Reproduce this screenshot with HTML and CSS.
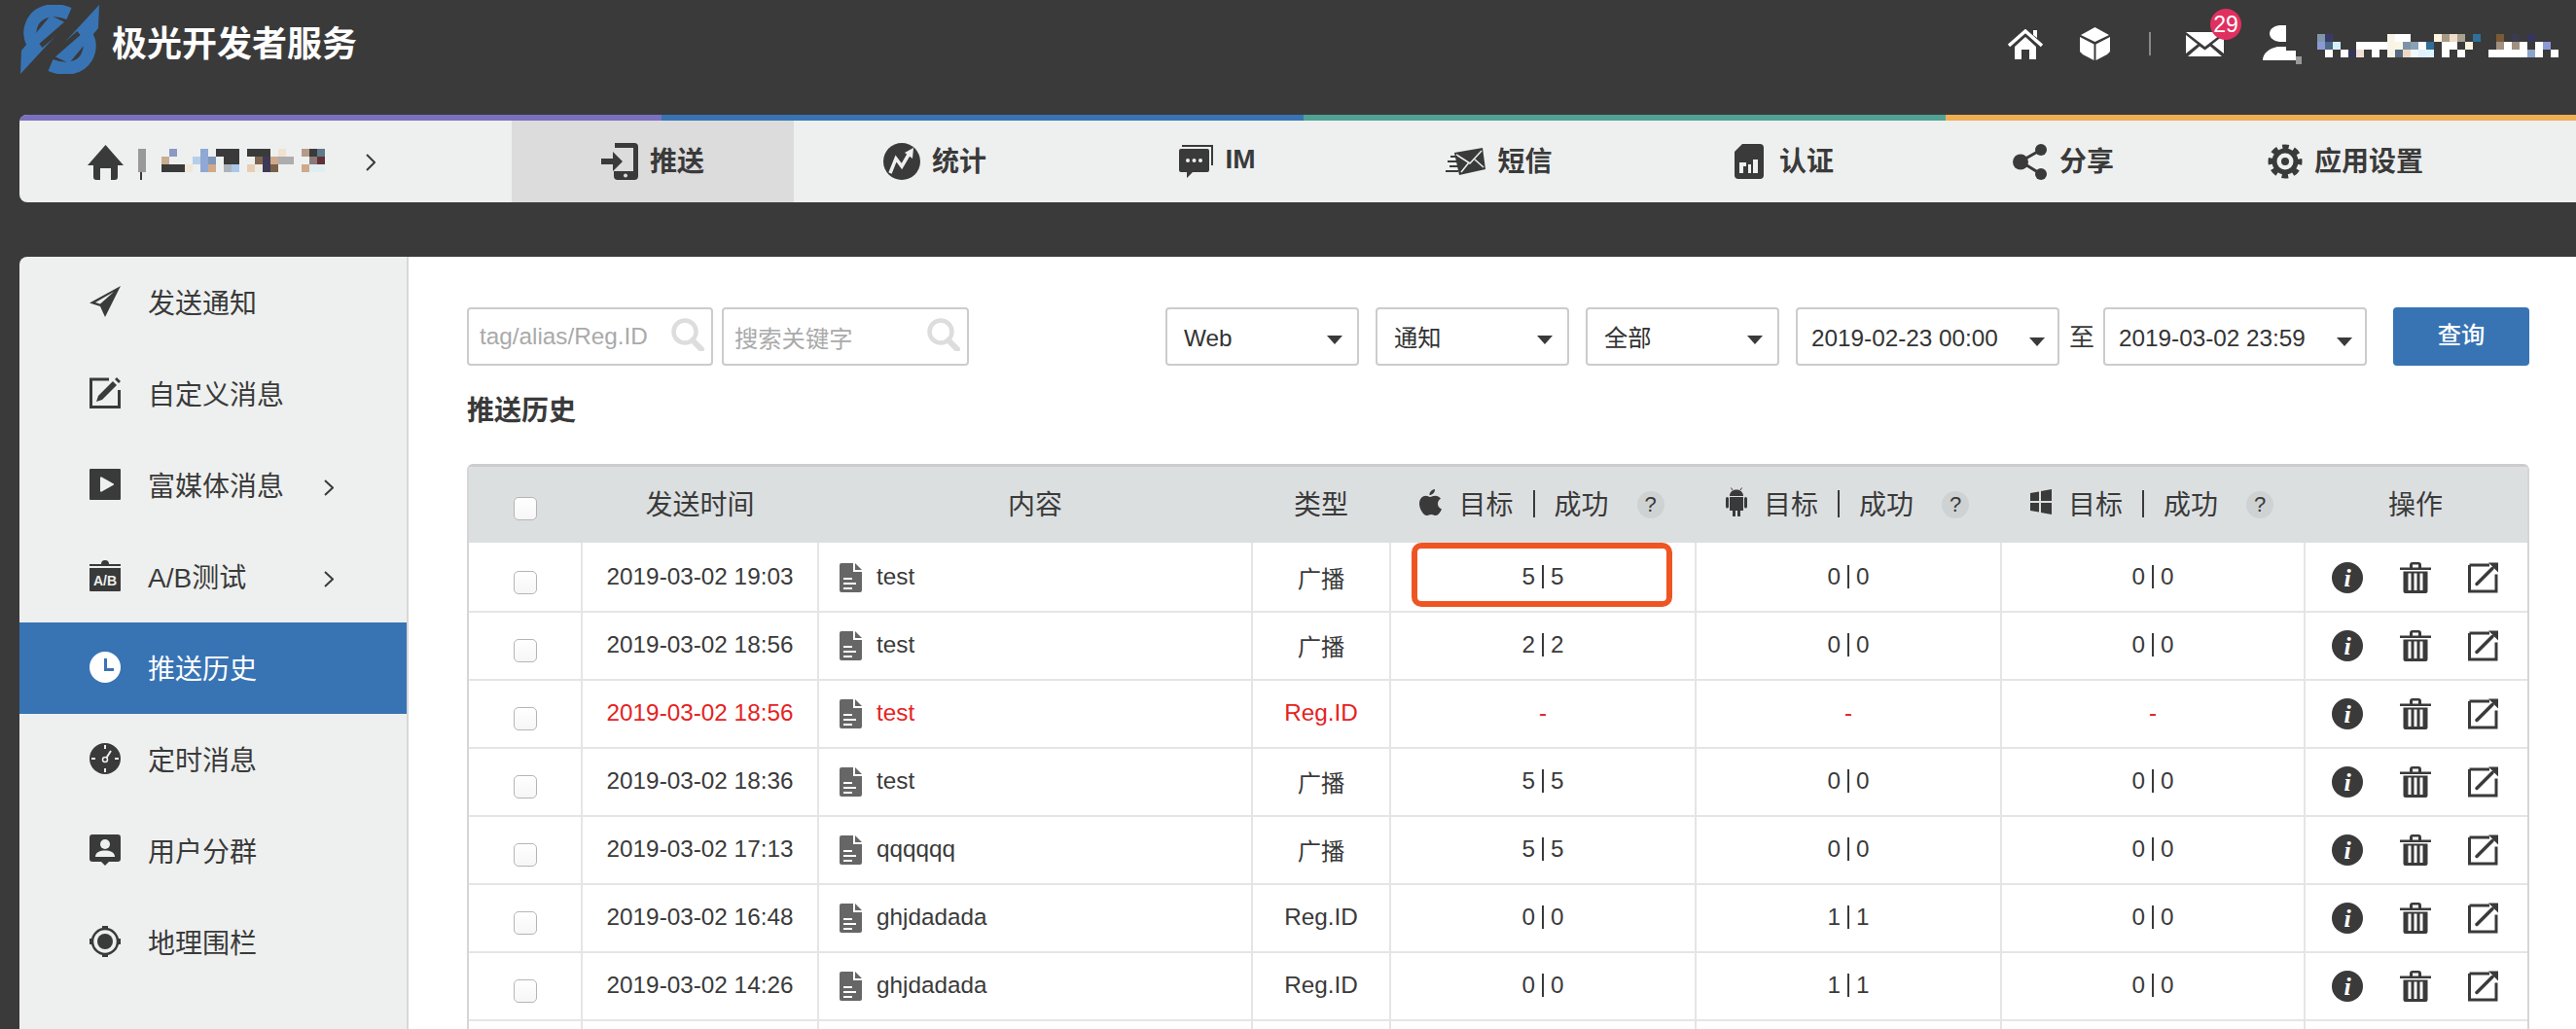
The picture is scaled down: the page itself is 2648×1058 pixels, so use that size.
FILE: index.html
```html
<!DOCTYPE html>
<html lang="zh-CN">
<head>
    <meta charset="UTF-8">
    <title>极光开发者服务</title>
    <link rel="stylesheet" href="styles.css">
</head>
<body>
    <svg class="defs" width="0" height="0">
        <symbol id="i-doc" viewBox="0 0 23 30">
            <path d="M2 0H14V9H23V28a2 2 0 0 1-2 2H2a2 2 0 0 1-2-2V2a2 2 0 0 1 2-2Z" fill="#666"/>
            <path d="M16 0L23 7H16Z" fill="#666"/>
            <path d="M4 15H13V17H4ZM4 20H17V22H4ZM4 25H13V27H4Z" fill="#fff"/>
        </symbol>
        <symbol id="i-trash" viewBox="0 0 32 32">
            <path d="M0 5.500H32V8H0ZM10 5.500V3a3 3 0 0 1 3-3H19a3 3 0 0 1 3 3V5.500H19V2.500H13V5.500Z" fill="#3a3a3a"/>
            <path d="M3.500 9.500H28.500V30a2 2 0 0 1-2 2H5.500a2 2 0 0 1-2-2ZM8.500 11.500V29H11.500V11.500ZM14.500 11.500V29H17.500V11.500ZM20.500 11.500V29H23.500V11.500Z" fill="#3a3a3a" fill-rule="evenodd"/>
        </symbol>
        <symbol id="i-open" viewBox="0 0 31 31">
            <path d="M1.500 2.500H22M29 12V29.500H1.500V2.500" fill="none" stroke="#3a3a3a" stroke-width="3"/>
            <path d="M9 22L25 6" fill="none" stroke="#3a3a3a" stroke-width="3.500" stroke-linecap="round"/>
            <path d="M21 0H31V10Z" fill="#3a3a3a"/>
        </symbol>
        <symbol id="i-search" viewBox="0 0 35 34">
            <circle cx="14" cy="14" r="11.500" fill="none" stroke="#ddd" stroke-width="4.500"/>
            <path d="M22 23L31 32" fill="none" stroke="#ddd" stroke-width="6" stroke-linecap="round"/>
        </symbol>
    </svg>

    <header class="topbar">
        <svg class="logo" viewBox="0 0 81 71">
            <path d="M81 0L80 24 50 60 33 52Z" fill="#3874b4"/>
            <path d="M0 71L1 47 31 11 48 19Z" fill="#3874b4"/>
            <path d="M50 9C36 3 20 5 13 17 8 26 9 36 15 42" fill="none" stroke="#3874b4" stroke-width="13"/>
            <path d="M31 62C45 68 61 66 68 54 73 45 72 35 66 29" fill="none" stroke="#3874b4" stroke-width="13"/>
            <path d="M60 8L21 42" fill="none" stroke="#3a3a3a" stroke-width="5"/>
            <path d="M60 29L21 63" fill="none" stroke="#3a3a3a" stroke-width="5"/>
        </svg>
        <div class="brand">极光开发者服务</div>
        <div class="top-tools">
            <svg class="tool-home" viewBox="0 0 36 31">
                <path d="M1 17L18 2 35 17" fill="none" stroke="#fff" stroke-width="3.500"/>
                <path d="M26 1H30V9L26 6Z" fill="#fff"/>
                <path d="M7 18L18 8 29 18V31H22V21H14V31H7Z" fill="#fff"/>
            </svg>
            <svg class="tool-cube" viewBox="0 0 31 34">
                <path d="M15.500 0L30 8 15.500 15 1 8Z" fill="#fff"/>
                <path d="M0 10L14.500 17.500V34L3 28 0 25Z" fill="#fff"/>
                <path d="M31 10L16.500 17.500V34L28 28 31 25Z" fill="#fff"/>
            </svg>
            <span class="tool-divider"></span>
            <div class="tool-mail">
                <svg viewBox="0 0 39 25">
                    <path d="M0 0H39L19.500 15Z" fill="#fff"/>
                    <path d="M0 3L12 12.500 0 22ZM39 3L27 12.500 39 22Z" fill="#fff"/>
                    <path d="M2 25L14 14.500 19.500 18.500 25 14.500 37 25Z" fill="#fff"/>
                </svg>
                <span class="badge">29</span>
            </div>
            <svg class="tool-user" viewBox="0 0 40 40">
                <path d="M17 0H24V17H17C11 16 7 13 7 8.500S11 1 17 0Z" fill="#fff"/>
                <path d="M15 22H24V26H34V36H0C0 29 6 24 15 22Z" fill="#fff"/>
                <rect x="34" y="32" width="6" height="8" fill="#999"/>
            </svg>
            <svg class="mosaic-user" viewBox="0 0 248 24">
                <rect x="0" y="0" width="8" height="8" fill="#7f97a8"/><rect x="0" y="8" width="8" height="8" fill="#8c99d8"/>
                <rect x="8" y="0" width="8" height="8" fill="#3a3a6a"/><rect x="8" y="8" width="8" height="8" fill="#4a6a85"/><rect x="8" y="16" width="8" height="8" fill="#fff"/>
                <rect x="16" y="8" width="8" height="8" fill="#d8f0fa"/><rect x="24" y="16" width="8" height="8" fill="#fff"/><rect x="32" y="16" width="8" height="8" fill="#35355a"/>
                <rect x="40" y="8" width="8" height="8" fill="#fff"/><rect x="40" y="16" width="8" height="8" fill="#f0e0d5"/>
                <rect x="48" y="8" width="8" height="8" fill="#fff"/><rect x="56" y="8" width="8" height="16" fill="#fff"/><rect x="64" y="8" width="8" height="8" fill="#fff"/>
                <rect x="72" y="0" width="8" height="24" fill="#f8f5e8"/><rect x="80" y="0" width="8" height="8" fill="#fff"/><rect x="80" y="8" width="8" height="8" fill="#fbf5e5"/><rect x="80" y="16" width="8" height="8" fill="#566a80"/>
                <rect x="88" y="0" width="8" height="8" fill="#fff"/><rect x="88" y="8" width="8" height="8" fill="#7d93a8"/><rect x="88" y="16" width="8" height="8" fill="#eed8c5"/>
                <rect x="96" y="8" width="8" height="8" fill="#8aa0b5"/><rect x="96" y="16" width="8" height="8" fill="#f0f8fd"/>
                <rect x="104" y="8" width="8" height="8" fill="#fff"/><rect x="104" y="16" width="8" height="8" fill="#e0f0ff"/>
                <rect x="112" y="8" width="8" height="8" fill="#2f6f9a"/><rect x="112" y="16" width="8" height="8" fill="#e0f4ff"/>
                <rect x="120" y="0" width="8" height="8" fill="#fdf5e0"/>
                <rect x="128" y="0" width="8" height="8" fill="#a89a88"/><rect x="128" y="8" width="8" height="16" fill="#fff"/>
                <rect x="136" y="0" width="8" height="8" fill="#f0dcc8"/><rect x="136" y="8" width="8" height="8" fill="#fff"/>
                <rect x="144" y="0" width="8" height="8" fill="#a8a090"/><rect x="144" y="16" width="8" height="8" fill="#fff"/>
                <rect x="152" y="8" width="8" height="8" fill="#fbf5e0"/><rect x="160" y="0" width="8" height="8" fill="#2f6f9a"/>
                <rect x="176" y="16" width="8" height="8" fill="#fff"/>
                <rect x="184" y="0" width="8" height="8" fill="#7a5a38"/><rect x="184" y="8" width="8" height="8" fill="#a09080"/><rect x="184" y="16" width="8" height="8" fill="#fff"/>
                <rect x="192" y="8" width="8" height="16" fill="#fff"/>
                <rect x="200" y="0" width="8" height="8" fill="#3a3a50"/><rect x="200" y="8" width="8" height="8" fill="#a09080"/><rect x="200" y="16" width="8" height="8" fill="#fff"/>
                <rect x="208" y="8" width="8" height="16" fill="#fff"/>
                <rect x="216" y="0" width="8" height="8" fill="#35355f"/><rect x="216" y="16" width="8" height="8" fill="#8ba3c8"/>
                <rect x="224" y="8" width="8" height="16" fill="#fff"/><rect x="232" y="8" width="8" height="8" fill="#8c99d8"/><rect x="240" y="16" width="8" height="8" fill="#fff"/>
            </svg>
        </div>
    </header>

    <nav class="mainnav">
        <div class="accent">
            <span class="accent-purple"></span>
            <span class="accent-blue"></span>
            <span class="accent-teal"></span>
            <span class="accent-orange"></span>
        </div>
        <div class="nav-row">
            <div class="crumb">
                <svg class="crumb-home" viewBox="0 0 37 36">
                    <path d="M18.500 0L37 21H31V33a3 3 0 0 1-3 3H24V24H13V36H9a3 3 0 0 1-3-3V21H0Z" fill="#3a3a3a"/>
                </svg>
                <svg class="mosaic-app" viewBox="0 0 192 32">
                    <rect x="0" y="0" width="8" height="24" fill="#999"/><rect x="2" y="24" width="2" height="8" fill="#3a3a3a"/>
                    <rect x="32" y="0" width="8" height="8" fill="#8c99c4"/><rect x="24" y="8" width="8" height="8" fill="#c9ad90"/><rect x="24" y="16" width="24" height="8" fill="#3a3a3a"/><rect x="48" y="16" width="8" height="8" fill="#efe7d8"/>
                    <rect x="56" y="8" width="8" height="8" fill="#b5cfe8"/><rect x="64" y="0" width="8" height="24" fill="#8fa8d4"/><rect x="72" y="8" width="8" height="8" fill="#7f97b8"/><rect x="72" y="16" width="8" height="8" fill="#cfa98a"/>
                    <rect x="80" y="0" width="24" height="8" fill="#3a3a3a"/><rect x="88" y="8" width="16" height="8" fill="#3a3a3a"/><rect x="88" y="16" width="8" height="8" fill="#adb3bb"/><rect x="96" y="16" width="8" height="8" fill="#a9c8e8"/>
                    <rect x="112" y="0" width="24" height="8" fill="#3a3a3a"/><rect x="120" y="8" width="8" height="8" fill="#7f6550"/><rect x="128" y="8" width="8" height="16" fill="#3c3a55"/><rect x="112" y="16" width="8" height="8" fill="#e8cdb5"/><rect x="120" y="16" width="8" height="8" fill="#f0ebe0"/>
                    <rect x="136" y="8" width="8" height="8" fill="#cfa98a"/><rect x="136" y="16" width="8" height="8" fill="#7a6048"/><rect x="144" y="0" width="8" height="8" fill="#efe3cf"/><rect x="144" y="8" width="16" height="8" fill="#adadad"/>
                    <rect x="168" y="0" width="8" height="8" fill="#b59a8a"/><rect x="168" y="16" width="8" height="8" fill="#cfa98a"/><rect x="176" y="0" width="8" height="8" fill="#3a3a3a"/><rect x="176" y="8" width="8" height="8" fill="#8a7a78"/>
                    <rect x="184" y="0" width="8" height="8" fill="#5f7a88"/><rect x="184" y="8" width="8" height="8" fill="#632f38"/><rect x="176" y="16" width="16" height="8" fill="#e0eef2"/>
                </svg>
                <svg class="crumb-arrow" viewBox="0 0 10 18">
                    <path d="M1 1L9 9 1 17" fill="none" stroke="#3a3a3a" stroke-width="2"/>
                </svg>
            </div>
            <a class="tab active">
                <svg class="tab-icon push" viewBox="0 0 38 38">
                    <path d="M14 0H34a4 4 0 0 1 4 4V34a4 4 0 0 1-4 4H17a4 4 0 0 1-4-4V29H33V5H14Z" fill="#3a3a3a"/>
                    <circle cx="25" cy="33.500" r="2" fill="#dcdcdc"/>
                    <path d="M0 16H12V9L22 19 12 29V22H0Z" fill="#3a3a3a"/>
                </svg>
                推送
            </a>
            <a class="tab">
                <svg class="tab-icon stat" viewBox="0 0 38 38">
                    <circle cx="19" cy="19" r="19" fill="#3a3a3a"/>
                    <path d="M7 31L13 16 19 24 26 12" fill="none" stroke="#eef0ef" stroke-width="3.500"/>
                    <path d="M22 10L31 5 30 16Z" fill="#eef0ef"/>
                </svg>
                统计
            </a>
            <a class="tab">
                <svg class="tab-icon im" viewBox="0 0 36 34">
                    <path d="M4 1H35V21" fill="none" stroke="#3a3a3a" stroke-width="2"/>
                    <path d="M3 4H30a2 2 0 0 1 2 2V26a2 2 0 0 1-2 2H15L9 34V28H3a2 2 0 0 1-2-2V6a2 2 0 0 1 2-2Z" fill="#3a3a3a"/>
                    <circle cx="10" cy="16" r="2" fill="#eef0ef"/><circle cx="16.500" cy="16" r="2" fill="#eef0ef"/><circle cx="23" cy="16" r="2" fill="#eef0ef"/>
                </svg>
                IM
            </a>
            <a class="tab">
                <svg class="tab-icon sms" viewBox="0 0 41 28">
                    <path d="M9 5L38 0 41 22 14 28Z" fill="#3a3a3a"/>
                    <path d="M11 7L25 16 37 3M16 25L24 15M30 12L39 20" fill="none" stroke="#eef0ef" stroke-width="1.500"/>
                    <path d="M5 9H12M2 14H12M4 19H13M0 24H13" fill="none" stroke="#3a3a3a" stroke-width="2"/>
                </svg>
                短信
            </a>
            <a class="tab">
                <svg class="tab-icon auth" viewBox="0 0 30 36">
                    <path d="M8 0H26a4 4 0 0 1 4 4V32a4 4 0 0 1-4 4H4a4 4 0 0 1-4-4V8Z" fill="#3a3a3a"/>
                    <path d="M5 19H12V23H9V30H5ZM14 21H17V30H14ZM19 16H24V30H19Z" fill="#eef0ef"/>
                </svg>
                认证
            </a>
            <a class="tab">
                <svg class="tab-icon share" viewBox="0 0 36 37">
                    <path d="M29 6L8 18 29 31" fill="none" stroke="#3a3a3a" stroke-width="3"/>
                    <circle cx="29" cy="6" r="6" fill="#3a3a3a"/>
                    <circle cx="8" cy="18.500" r="8" fill="#3a3a3a"/>
                    <circle cx="29" cy="31" r="6" fill="#3a3a3a"/>
                </svg>
                分享
            </a>
            <a class="tab">
                <svg class="tab-icon gear" viewBox="0 0 36 36">
                    <circle cx="18" cy="18" r="14.500" fill="none" stroke="#3a3a3a" stroke-width="6" stroke-dasharray="6.390 5" stroke-dashoffset="3.200"/>
                    <circle cx="18" cy="18" r="11" fill="none" stroke="#3a3a3a" stroke-width="5"/>
                    <circle cx="18" cy="18" r="4" fill="#3a3a3a"/>
                </svg>
                应用设置
            </a>
        </div>
    </nav>

    <div class="workspace">
        <aside class="sidebar">
            <a class="side-item">
                <svg class="side-icon" viewBox="0 0 32 32">
                    <path d="M32 0L0 17.500 11 21 16 32Z" fill="#3a3a3a"/>
                    <path d="M25 6L6 17 11 18.500Z" fill="#eef0ef"/>
                </svg>
                <span class="side-label">发送通知</span>
            </a>
            <a class="side-item">
                <svg class="side-icon" viewBox="0 0 32 32">
                    <path d="M20 2H1.500V30.500H30.500V13" fill="none" stroke="#3a3a3a" stroke-width="3"/>
                    <path d="M9 19L24 4 28 8 13 23 7 25Z" fill="#3a3a3a"/>
                    <path d="M26 2L28 0 32 4 30 6Z" fill="#3a3a3a"/>
                </svg>
                <span class="side-label">自定义消息</span>
            </a>
            <a class="side-item">
                <svg class="side-icon" viewBox="0 0 32 32">
                    <rect width="32" height="32" rx="1" fill="#3a3a3a"/>
                    <path d="M11 9.500a1 1 0 0 1 1.500-1L24 15a1 1 0 0 1 0 2L12.500 23.500a1 1 0 0 1-1.500-1Z" fill="#eef0ef"/>
                </svg>
                <span class="side-label">富媒体消息</span>
                <svg class="side-arrow" viewBox="0 0 10 17"><path d="M1 1L9 8.500 1 16" fill="none" stroke="#3a3a3a" stroke-width="2"/></svg>
            </a>
            <a class="side-item">
                <svg class="side-icon" viewBox="0 0 32 32">
                    <path d="M0 4H12a4 4 0 0 1 8 0H32V6H0Z" fill="#3a3a3a"/>
                    <path d="M0 8H32V31a1 1 0 0 1-1 1H1a1 1 0 0 1-1-1Z" fill="#3a3a3a"/>
                    <text x="16" y="26" class="ab-text">A/B</text>
                </svg>
                <span class="side-label">A/B测试</span>
                <svg class="side-arrow" viewBox="0 0 10 17"><path d="M1 1L9 8.500 1 16" fill="none" stroke="#3a3a3a" stroke-width="2"/></svg>
            </a>
            <a class="side-item active">
                <svg class="side-icon" viewBox="0 0 32 32">
                    <circle cx="16" cy="16" r="16" fill="#fff"/>
                    <path d="M15 7H18V17H25V20H15Z" fill="#3874b4"/>
                </svg>
                <span class="side-label">推送历史</span>
            </a>
            <a class="side-item">
                <svg class="side-icon" viewBox="0 0 32 32">
                    <circle cx="16" cy="16" r="16" fill="#3a3a3a"/>
                    <path d="M16 2V6M16 26V30M2 16H6M26 16H30" stroke="#eef0ef" stroke-width="2"/>
                    <circle cx="16" cy="17" r="2.500" fill="none" stroke="#eef0ef" stroke-width="1.500"/>
                    <path d="M17.500 15L22 8" stroke="#eef0ef" stroke-width="2"/>
                </svg>
                <span class="side-label">定时消息</span>
            </a>
            <a class="side-item">
                <svg class="side-icon" viewBox="0 0 32 32">
                    <path d="M3 0H29a3 3 0 0 1 3 3V25a3 3 0 0 1-3 3H20L16 32 12 28H3a3 3 0 0 1-3-3V3a3 3 0 0 1 3-3Z" fill="#3a3a3a"/>
                    <circle cx="16" cy="10" r="5" fill="#eef0ef"/>
                    <path d="M6 23C6 18 11 16.500 16 16.500S26 18 26 23Z" fill="#eef0ef"/>
                </svg>
                <span class="side-label">用户分群</span>
            </a>
            <a class="side-item">
                <svg class="side-icon" viewBox="0 0 32 32">
                    <circle cx="16" cy="16" r="13" fill="none" stroke="#3a3a3a" stroke-width="2.500"/>
                    <circle cx="16" cy="16" r="8" fill="#3a3a3a"/>
                    <path d="M13 0H19V4H13ZM13 28H19V32H13ZM0 13H4V19H0ZM28 13H32V19H28Z" fill="#3a3a3a"/>
                </svg>
                <span class="side-label">地理围栏</span>
            </a>
        </aside>

        <main class="content">
            <div class="toolbar">
                <div class="search first"><span class="placeholder">tag/alias/Reg.ID</span><svg class="search-icon"><use href="#i-search"/></svg></div>
                <div class="search"><span class="placeholder">搜索关键字</span><svg class="search-icon"><use href="#i-search"/></svg></div>
                <div class="filters">
                    <div class="select">Web<span class="caret"></span></div>
                    <div class="select">通知<span class="caret"></span></div>
                    <div class="select">全部<span class="caret"></span></div>
                    <div class="select date">2019-02-23 00:00<span class="caret"></span></div>
                    <span class="date-to">至</span>
                    <div class="select date">2019-03-02 23:59<span class="caret"></span></div>
                    <a class="btn-query">查询</a>
                </div>
            </div>

            <h2 class="section-title">推送历史</h2>

            <div class="table-wrap">
                <table class="history">
                    <colgroup>
                        <col class="c-check"><col class="c-time"><col class="c-body"><col class="c-type">
                        <col class="c-stat"><col class="c-stat"><col class="c-stat-last"><col class="c-ops">
                    </colgroup>
                    <thead>
                        <tr>
                            <th><input type="checkbox" class="check"></th>
                            <th>发送时间</th>
                            <th>内容</th>
                            <th>类型</th>
                            <th>
                                <div class="stat-head">
                                    <svg class="os-icon apple" viewBox="0 0 23 27">
                                        <path d="M16 0c.3 3-2.500 6-5.500 6C10.200 3 13 .3 16 0ZM11 8c1.500 0 3-1.200 5.500-1.200 2 0 4.200 1 5.500 3-4.500 2.800-3.800 8.800 1 10.700-1.500 3.500-3.700 6.500-6 6.500-1.800 0-2.700-1.100-4.800-1.100s-3 1.100-4.700 1.100C4.500 27 0 20.500 0 15c0-5.500 3.500-8.200 6.500-8.200C8.500 6.800 9.800 8 11 8Z" fill="#3a3a3a"/>
                                    </svg>
                                    <span>目标</span><i class="bar"></i><span>成功</span><span class="tip">?</span>
                                </div>
                            </th>
                            <th>
                                <div class="stat-head">
                                    <svg class="os-icon android" viewBox="0 0 22 30">
                                        <path d="M4 9C4 5 7 2.500 11 2.500S18 5 18 9ZM4 10H18V24H15V29a1.500 1.500 0 0 1-3 0V24H10V29a1.500 1.500 0 0 1-3 0V24H4ZM0 11.500a1.500 1.500 0 0 1 3 0V20a1.500 1.500 0 0 1-3 0ZM19 11.500a1.500 1.500 0 0 1 3 0V20a1.500 1.500 0 0 1-3 0Z" fill="#3a3a3a"/>
                                        <path d="M7 3L5.500 .5M15 3L16.500 .5" stroke="#3a3a3a" stroke-width="1"/>
                                    </svg>
                                    <span>目标</span><i class="bar"></i><span>成功</span><span class="tip">?</span>
                                </div>
                            </th>
                            <th>
                                <div class="stat-head">
                                    <svg class="os-icon windows" viewBox="0 0 22 26">
                                        <path d="M0 4L9 2.500V12H0ZM11 2L22 0V12H11ZM0 14H9V23.500L0 22ZM11 14H22V26L11 24Z" fill="#3a3a3a"/>
                                    </svg>
                                    <span>目标</span><i class="bar"></i><span>成功</span><span class="tip">?</span>
                                </div>
                            </th>
                            <th>操作</th>
                        </tr>
                    </thead>
                    <tbody>
                        <tr>
                            <td><input type="checkbox" class="check"></td>
                            <td>2019-03-02 19:03</td>
                            <td><div class="msg"><svg class="doc"><use href="#i-doc"/></svg>test</div></td>
                            <td>广播</td>
                            <td class="marked">5<i class="num-bar"></i>5<span class="mark"></span></td>
                            <td>0<i class="num-bar"></i>0</td>
                            <td>0<i class="num-bar"></i>0</td>
                            <td><div class="ops"><svg class="op-info" viewBox="0 0 32 32"><circle cx="16" cy="16" r="16"/><text x="16" y="25">i</text></svg><svg class="op-trash"><use href="#i-trash"/></svg><svg class="op-open"><use href="#i-open"/></svg></div></td>
                        </tr>
                        <tr>
                            <td><input type="checkbox" class="check"></td>
                            <td>2019-03-02 18:56</td>
                            <td><div class="msg"><svg class="doc"><use href="#i-doc"/></svg>test</div></td>
                            <td>广播</td>
                            <td>2<i class="num-bar"></i>2</td>
                            <td>0<i class="num-bar"></i>0</td>
                            <td>0<i class="num-bar"></i>0</td>
                            <td><div class="ops"><svg class="op-info" viewBox="0 0 32 32"><circle cx="16" cy="16" r="16"/><text x="16" y="25">i</text></svg><svg class="op-trash"><use href="#i-trash"/></svg><svg class="op-open"><use href="#i-open"/></svg></div></td>
                        </tr>
                        <tr class="failed">
                            <td><input type="checkbox" class="check"></td>
                            <td>2019-03-02 18:56</td>
                            <td><div class="msg"><svg class="doc"><use href="#i-doc"/></svg>test</div></td>
                            <td>Reg.ID</td>
                            <td>-</td>
                            <td>-</td>
                            <td>-</td>
                            <td><div class="ops"><svg class="op-info" viewBox="0 0 32 32"><circle cx="16" cy="16" r="16"/><text x="16" y="25">i</text></svg><svg class="op-trash"><use href="#i-trash"/></svg><svg class="op-open"><use href="#i-open"/></svg></div></td>
                        </tr>
                        <tr>
                            <td><input type="checkbox" class="check"></td>
                            <td>2019-03-02 18:36</td>
                            <td><div class="msg"><svg class="doc"><use href="#i-doc"/></svg>test</div></td>
                            <td>广播</td>
                            <td>5<i class="num-bar"></i>5</td>
                            <td>0<i class="num-bar"></i>0</td>
                            <td>0<i class="num-bar"></i>0</td>
                            <td><div class="ops"><svg class="op-info" viewBox="0 0 32 32"><circle cx="16" cy="16" r="16"/><text x="16" y="25">i</text></svg><svg class="op-trash"><use href="#i-trash"/></svg><svg class="op-open"><use href="#i-open"/></svg></div></td>
                        </tr>
                        <tr>
                            <td><input type="checkbox" class="check"></td>
                            <td>2019-03-02 17:13</td>
                            <td><div class="msg"><svg class="doc"><use href="#i-doc"/></svg>qqqqqq</div></td>
                            <td>广播</td>
                            <td>5<i class="num-bar"></i>5</td>
                            <td>0<i class="num-bar"></i>0</td>
                            <td>0<i class="num-bar"></i>0</td>
                            <td><div class="ops"><svg class="op-info" viewBox="0 0 32 32"><circle cx="16" cy="16" r="16"/><text x="16" y="25">i</text></svg><svg class="op-trash"><use href="#i-trash"/></svg><svg class="op-open"><use href="#i-open"/></svg></div></td>
                        </tr>
                        <tr>
                            <td><input type="checkbox" class="check"></td>
                            <td>2019-03-02 16:48</td>
                            <td><div class="msg"><svg class="doc"><use href="#i-doc"/></svg>ghjdadada</div></td>
                            <td>Reg.ID</td>
                            <td>0<i class="num-bar"></i>0</td>
                            <td>1<i class="num-bar"></i>1</td>
                            <td>0<i class="num-bar"></i>0</td>
                            <td><div class="ops"><svg class="op-info" viewBox="0 0 32 32"><circle cx="16" cy="16" r="16"/><text x="16" y="25">i</text></svg><svg class="op-trash"><use href="#i-trash"/></svg><svg class="op-open"><use href="#i-open"/></svg></div></td>
                        </tr>
                        <tr>
                            <td><input type="checkbox" class="check"></td>
                            <td>2019-03-02 14:26</td>
                            <td><div class="msg"><svg class="doc"><use href="#i-doc"/></svg>ghjdadada</div></td>
                            <td>Reg.ID</td>
                            <td>0<i class="num-bar"></i>0</td>
                            <td>1<i class="num-bar"></i>1</td>
                            <td>0<i class="num-bar"></i>0</td>
                            <td><div class="ops"><svg class="op-info" viewBox="0 0 32 32"><circle cx="16" cy="16" r="16"/><text x="16" y="25">i</text></svg><svg class="op-trash"><use href="#i-trash"/></svg><svg class="op-open"><use href="#i-open"/></svg></div></td>
                        </tr>
                        <tr class="row-stub">
                            <td></td><td></td><td></td><td></td><td></td><td></td><td></td><td></td>
                        </tr>
                    </tbody>
                </table>
            </div>
        </main>
    </div>
</body>
</html>
```

FILE: styles.css
```css
* {
    box-sizing: border-box;
}
html, body {
    height: 1058px;
    overflow: hidden;
}
body {
    margin: 0;
    background-color: #3a3a3a;
    color: #3a3a3a;
    font-family: "Liberation Sans", "Noto Sans CJK SC", sans-serif;
    font-size: 24.3px;
}
.defs {
    position: absolute;
}
svg {
    display: block;
    flex: none;
}

/* top bar */
.topbar {
    display: flex;
    align-items: center;
    height: 118px;
    padding: 0 18px 28px 21px;
}
.logo {
    width: 81px;
    height: 71px;
    margin-bottom: 9px;
}
.brand {
    margin: 0 0 6px 13px;
    color: #fff;
    font-size: 36px;
    font-weight: 700;
}
.top-tools {
    display: flex;
    align-items: center;
    margin-left: auto;
}
.tool-home {
    width: 36px;
    height: 31px;
}
.tool-cube {
    width: 31px;
    height: 34px;
    margin-left: 38px;
}
.tool-divider {
    width: 2px;
    height: 24px;
    margin: 0 36px 0 40px;
    background: #888;
}
.tool-mail {
    position: relative;
    width: 39px;
    height: 25px;
}
.badge {
    position: absolute;
    left: 25px;
    top: -24px;
    width: 32px;
    height: 32px;
    border-radius: 50%;
    background: #e0305f;
    color: #fff;
    font-size: 23px;
    line-height: 32px;
    text-align: center;
}
.tool-user {
    width: 40px;
    height: 40px;
    margin: 2px 16px 0 40px;
}
.mosaic-user {
    width: 248px;
    height: 24px;
    margin-top: 4px;
}

/* main nav */
.mainnav {
    margin-left: 20px;
    height: 90px;
    border-top-left-radius: 8px;
    border-bottom-left-radius: 8px;
    overflow: hidden;
    background: #eef0ef;
}
.accent {
    display: flex;
    height: 6px;
}
.accent span {
    width: 660px;
}
.accent .accent-purple { background: #7a70c0; }
.accent .accent-blue { background: #3874b4; }
.accent .accent-teal { background: #50a394; }
.accent .accent-orange { background: #f0ae55; width: 648px; }
.nav-row {
    display: flex;
    height: 84px;
}
.crumb {
    display: flex;
    align-items: center;
    width: 506px;
    padding-left: 70px;
}
.crumb-home {
    width: 37px;
    height: 36px;
    margin-top: 2px;
}
.mosaic-app {
    width: 192px;
    height: 32px;
    margin: 6px 0 0 15px;
}
.crumb-arrow {
    width: 10px;
    height: 18px;
    margin: 2px 0 0 42px;
}
.tab {
    display: flex;
    align-items: center;
    justify-content: center;
    gap: 12px;
    width: 290px;
    padding-bottom: 4px;
    font-size: 28px;
    font-weight: 700;
    white-space: nowrap;
}
.tab.active {
    background: #dcdcdc;
}
.tab-icon { margin-top: 4px; }
.tab-icon.push { width: 38px; height: 38px; }
.tab-icon.stat { width: 38px; height: 38px; }
.tab-icon.im { width: 36px; height: 34px; }
.tab-icon.sms { width: 41px; height: 28px; }
.tab-icon.auth { width: 30px; height: 36px; margin-left: 6px; margin-right: 4px; }
.tab-icon.share { width: 36px; height: 37px; }
.tab-icon.gear { width: 36px; height: 36px; }

/* sidebar + content */
.workspace {
    display: flex;
    margin: 56px 0 0 20px;
    height: 794px;
}
.sidebar {
    width: 400px;
    flex: none;
    border-right: 2px solid #d8d8d8;
    border-top-left-radius: 8px;
    background: #eef0ef;
    overflow: hidden;
}
.side-item {
    display: flex;
    align-items: center;
    height: 94px;
    padding: 0 0 3px 72px;
    font-size: 28px;
}
.side-item.active {
    background: #3874b4;
    color: #fff;
}
.side-icon {
    width: 32px;
    height: 32px;
    margin-right: 28px;
}
.side-label {
    width: 181px;
}
.side-arrow {
    width: 10px;
    height: 17px;
    margin-top: 8px;
}
.ab-text {
    fill: #eef0ef;
    font-size: 14px;
    font-weight: 700;
    text-anchor: middle;
}
.content {
    flex: 1;
    height: 794px;
    padding: 52px 48px 0 60px;
    background: #fff;
    overflow: hidden;
}

/* toolbar */
.toolbar {
    display: flex;
    height: 60px;
}
.search {
    display: flex;
    align-items: center;
    justify-content: space-between;
    width: 254px;
    height: 60px;
    padding: 0 6px 0 11px;
    border: 2px solid #ccc;
    border-radius: 4px;
}
.search.first {
    width: 253px;
    margin-right: 9px;
}
.placeholder {
    color: #aaa;
}
.search-icon {
    width: 35px;
    height: 34px;
    margin-top: -4px;
}
.filters {
    display: flex;
    align-items: center;
    gap: 17px;
    margin-left: auto;
}
.select {
    position: relative;
    width: 199px;
    height: 60px;
    padding: 0 17px;
    border: 2px solid #ccc;
    border-radius: 4px;
    line-height: 60px;
    color: #333;
}
.select.date {
    width: 271px;
    padding: 0 14px;
}
.caret {
    position: absolute;
    right: 15px;
    top: 27px;
    width: 0;
    height: 0;
    border-left: 8px solid transparent;
    border-right: 8px solid transparent;
    border-top: 9px solid #3a3a3a;
}
.select.date .caret {
    right: 13px;
    top: 29px;
}
.date-to {
    margin: -4px -8px 0 -7px;
    font-size: 26px;
}
.btn-query {
    width: 140px;
    height: 60px;
    margin-left: 10px;
    border-radius: 4px;
    background: #3874b4;
    color: #fff;
    font-weight: 500;
    line-height: 58px;
    text-align: center;
}
.section-title {
    margin: 32px 0 0;
    height: 69px;
    font-size: 28px;
    font-weight: 700;
    line-height: 30px;
}

/* table */
.table-wrap {
    width: 2120px;
    border-top: 3px solid #ccc;
    border-left: 2px solid #d5d5d5;
    border-right: 2px solid #d5d5d5;
    border-top-left-radius: 6px;
    border-top-right-radius: 6px;
    overflow: hidden;
}
.history {
    width: 2116px;
    table-layout: fixed;
    border-collapse: separate;
    border-spacing: 0;
}
.c-check { width: 117px; }
.c-time { width: 243px; }
.c-body { width: 446px; }
.c-type { width: 142px; }
.c-stat { width: 314px; }
.c-stat-last { width: 312px; }
.c-ops { width: 228px; }
.history th {
    height: 78px;
    padding: 0 2px 4px 0;
    background: #dcdfe0;
    font-size: 28px;
    font-weight: 400;
}
.history td {
    height: 70px;
    padding: 0 0 2px;
    border-right: 2px solid #e5e5e5;
    border-bottom: 2px solid #e5e5e5;
    text-align: center;
}
.history tbody tr:first-child td {
    height: 72px;
    padding-top: 2px;
}
.history td:last-child {
    border-right: 0;
}
.history .row-stub td {
    height: 8px;
    padding: 0;
    border-bottom: 0;
}
.failed td {
    color: #e5231f;
}
.check {
    appearance: none;
    display: block;
    width: 24px;
    height: 24px;
    margin: 12px auto 0;
    border: 1px solid #b5b5b5;
    border-radius: 5px;
    background: linear-gradient(#fff, #f6f6f6);
}
.stat-head {
    display: flex;
    align-items: center;
    justify-content: center;
    padding-right: 2px;
}
.os-icon { margin-right: 17px; margin-top: -2px; }
.os-icon.apple { width: 23px; height: 27px; }
.os-icon.android { width: 22px; height: 30px; }
.os-icon.windows { width: 22px; height: 26px; }
.bar {
    width: 2px;
    height: 28px;
    margin: 2px 20px 0;
    background: #3a3a3a;
}
.tip {
    width: 28px;
    height: 28px;
    margin: 4px 0 0 29px;
    border-radius: 50%;
    background: #cfd2d3;
    font-size: 22px;
    line-height: 28px;
}
.msg {
    display: flex;
    align-items: center;
    gap: 15px;
    padding-left: 21px;
}
.doc {
    width: 23px;
    height: 30px;
    margin-top: 2px;
}
.num-bar {
    display: inline-block;
    width: 2px;
    height: 24px;
    margin: 0 7px;
    background: #3a3a3a;
    vertical-align: -4px;
}
.marked {
    position: relative;
}
.mark {
    position: absolute;
    left: 21px;
    right: 23px;
    top: 0;
    height: 66px;
    border: 6px solid #ee5522;
    border-radius: 10px;
}
.ops {
    display: flex;
    gap: 38px;
    padding: 2px 0 0 27px;
}
.ops svg {
    height: 32px;
}
.op-info { width: 32px; }
.op-trash { width: 32px; }
.op-open { width: 31px; }
.op-info circle {
    fill: #3a3a3a;
}
.op-info text {
    fill: #fff;
    font-family: "Liberation Serif", serif;
    font-size: 26px;
    font-style: italic;
    font-weight: 700;
    text-anchor: middle;
}
```
